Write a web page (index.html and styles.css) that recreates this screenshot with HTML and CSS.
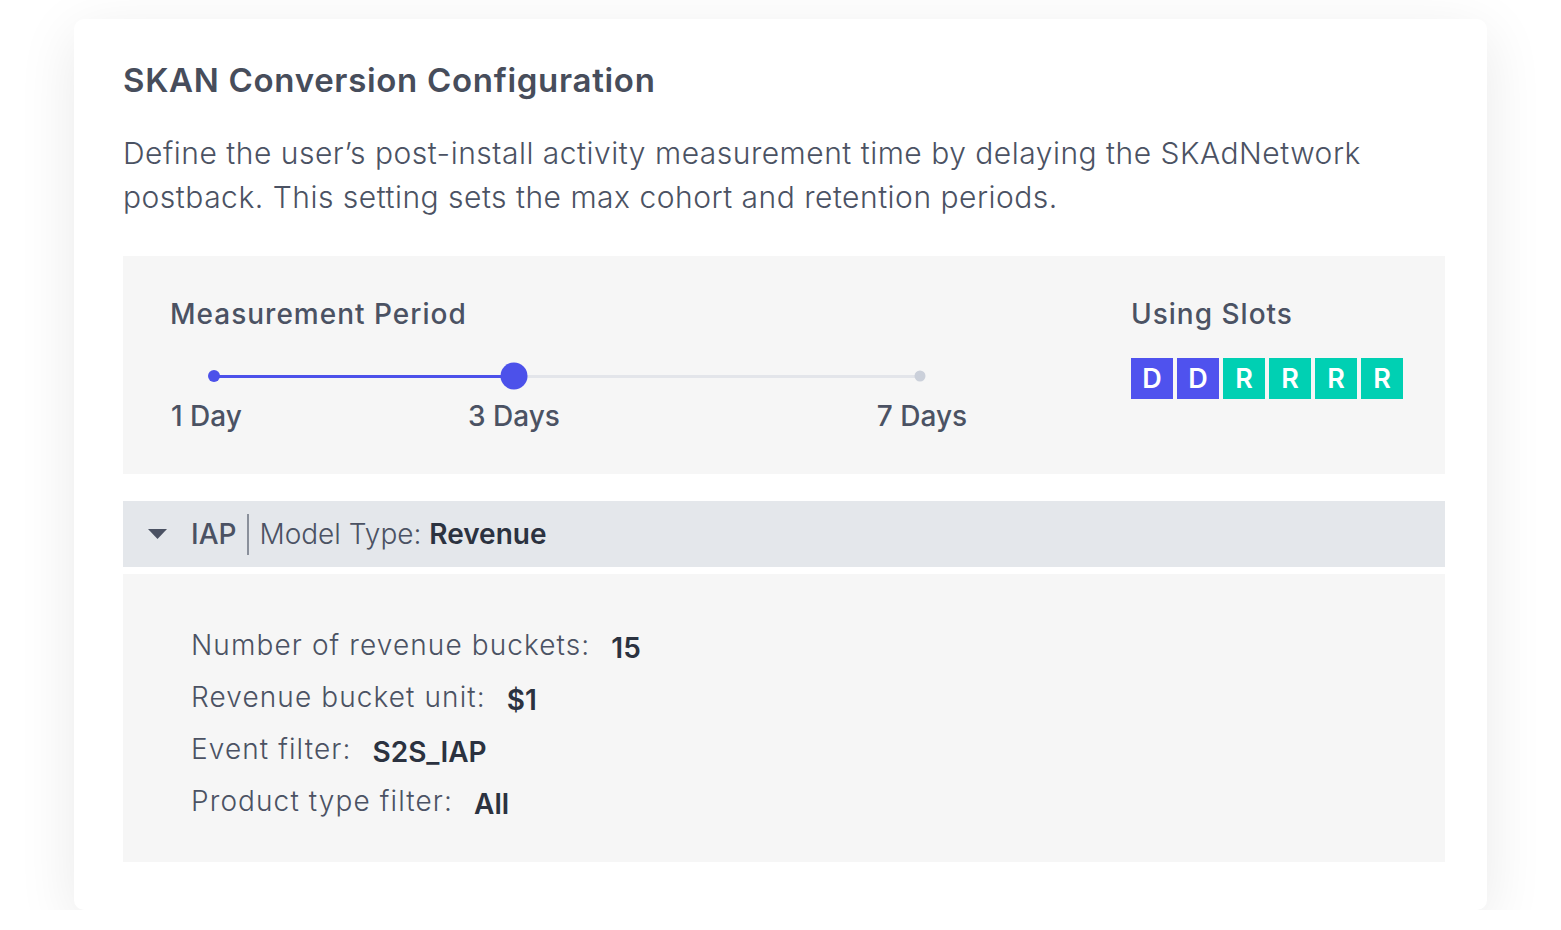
FILE: index.html
```html
<!DOCTYPE html>
<html lang="en">
<head>
    <meta charset="UTF-8">
    <title>SKAN Conversion Configuration</title>
    <link rel="stylesheet" href="styles.css">
</head>
<body>
    <div class="card">
        <h1 class="title">SKAN Conversion Configuration</h1>
        <p class="desc">Define the user’s post-install activity measurement time by delaying the SKAdNetwork postback. This setting sets the max cohort and retention periods.</p>

        <!-- Measurement period + slots -->
        <div class="period-panel">
            <div class="period">
                <h3 class="panel-title">Measurement Period</h3>
                <div class="slider">
                    <div class="track"></div>
                    <div class="track-fill" style="width: 300px"></div>
                    <span class="dot dot-start"></span>
                    <span class="knob" style="left: 300px"></span>
                    <span class="dot dot-end" style="left: 706px"></span>
                </div>
                <div class="slider-labels">
                    <span class="stop-label first">1 Day</span>
                    <span class="stop-label" style="left: 300px">3 Days</span>
                    <span class="stop-label" style="left: 708px">7 Days</span>
                </div>
            </div>
            <div class="slots-box">
                <h3 class="panel-title">Using Slots</h3>
                <div class="slots">
                    <span class="slot d">D</span>
                    <span class="slot d">D</span>
                    <span class="slot r">R</span>
                    <span class="slot r">R</span>
                    <span class="slot r">R</span>
                    <span class="slot r">R</span>
                </div>
            </div>
        </div>

        <!-- IAP model -->
        <div class="model-head">
            <svg class="caret" width="19" height="10" viewBox="0 0 19 10"><path d="M0 0 L19 0 L9.5 10 Z" fill="#4b5263"/></svg>
            <span class="model-name">IAP</span>
            <span class="divider"></span>
            <span class="model-type">Model Type: <b>Revenue</b></span>
        </div>
        <div class="model-body">
            <div class="row"><span class="label">Number of revenue buckets:</span><span class="value">15</span></div>
            <div class="row"><span class="label">Revenue bucket unit:</span><span class="value">$1</span></div>
            <div class="row"><span class="label">Event filter:</span><span class="value">S2S_IAP</span></div>
            <div class="row"><span class="label">Product type filter:</span><span class="value">All</span></div>
        </div>
    </div>
</body>
</html>
```

FILE: styles.css
```css
/* General */
body {
    margin: 0;
    padding: 19px 0 0 74px;
    background: #fff;
    font-family: 'Inter', 'Lato', sans-serif;
    color: #4b5263;
}

.card {
    width: 1413px;
    height: 891px;
    box-sizing: border-box;
    padding: 41px 42px 48px 49px;
    background: #fff;
    border-radius: 10px;
    box-shadow: 0 14px 60px rgba(0, 0, 0, 0.09);
}

.title {
    margin: 0;
    font-size: 33px;
    line-height: 40px;
    font-weight: 600;
    color: #474d5b;
    letter-spacing: 0.7px;
}

.desc {
    margin: 31px 0 0;
    font-size: 30px;
    line-height: 44px;
    font-weight: 300;
    color: #4b5263;
    letter-spacing: 0.5px;
}

/* Period panel */
.period-panel {
    margin-top: 37px;
    height: 218px;
    box-sizing: border-box;
    padding: 40px 42px 0 47px;
    background: #f6f6f6;
    display: flex;
    justify-content: space-between;
}

.panel-title {
    margin: 0;
    font-size: 28px;
    line-height: 36px;
    font-weight: 500;
    color: #4b5263;
    letter-spacing: 1px;
}

.slider {
    position: relative;
    width: 706px;
    height: 26px;
    margin: 31px 0 0 44px;
}

.track {
    position: absolute;
    left: 0;
    right: 0;
    top: 12px;
    height: 3px;
    background: #e3e5ea;
}

.track-fill {
    position: absolute;
    left: 0;
    top: 12px;
    height: 3px;
    background: #4c51ea;
}

.dot, .knob {
    position: absolute;
    border-radius: 50%;
    transform: translate(-50%, -50%);
    top: 13px;
}

.dot-start {
    left: 0;
    width: 12px;
    height: 12px;
    background: #4c51ea;
}

.dot-end {
    width: 11px;
    height: 11px;
    background: #cbd0da;
}

.knob {
    width: 27px;
    height: 27px;
    background: #4c51ea;
}

.slider-labels {
    position: relative;
    width: 706px;
    height: 36px;
    margin: 9px 0 0 44px;
    font-size: 28px;
    line-height: 36px;
    font-weight: 500;
}

.stop-label {
    position: absolute;
    top: 0;
    transform: translateX(-50%);
    white-space: nowrap;
}

.stop-label.first {
    left: -43px;
    transform: none;
}

.slots {
    display: flex;
    gap: 4px;
    margin-top: 26px;
}

.slot {
    width: 42px;
    height: 41px;
    color: #fff;
    font-size: 27px;
    font-weight: 600;
    line-height: 41px;
    text-align: center;
}

.slot.d {
    background: #4f52ee;
}

.slot.r {
    background: #00d0b3;
}

/* IAP model */
.model-head {
    margin-top: 27px;
    height: 66px;
    background: #e4e7eb;
    display: flex;
    align-items: center;
    padding-left: 25px;
    font-size: 28px;
}

.caret {
    margin-right: 24px;
}

.model-name {
    font-weight: 500;
    color: #4b5263;
}

.divider {
    width: 2px;
    height: 41px;
    background: #8a909b;
    margin: 0 10px 0 11px;
}

.model-type {
    font-weight: 300;
    color: #4b5263;
}

.model-type b {
    font-weight: 600;
    color: #2b3240;
}

.model-body {
    margin-top: 7px;
    height: 288px;
    box-sizing: border-box;
    padding: 45px 0 0 68px;
    background: #f6f6f6;
}

.row {
    display: flex;
    align-items: baseline;
    gap: 21px;
    font-size: 28px;
    line-height: 52px;
}

.label {
    font-weight: 300;
    color: #4b5263;
    letter-spacing: 1.1px;
}

.value {
    font-weight: 600;
    color: #2b3240;
    position: relative;
    top: 3px;
}
```
